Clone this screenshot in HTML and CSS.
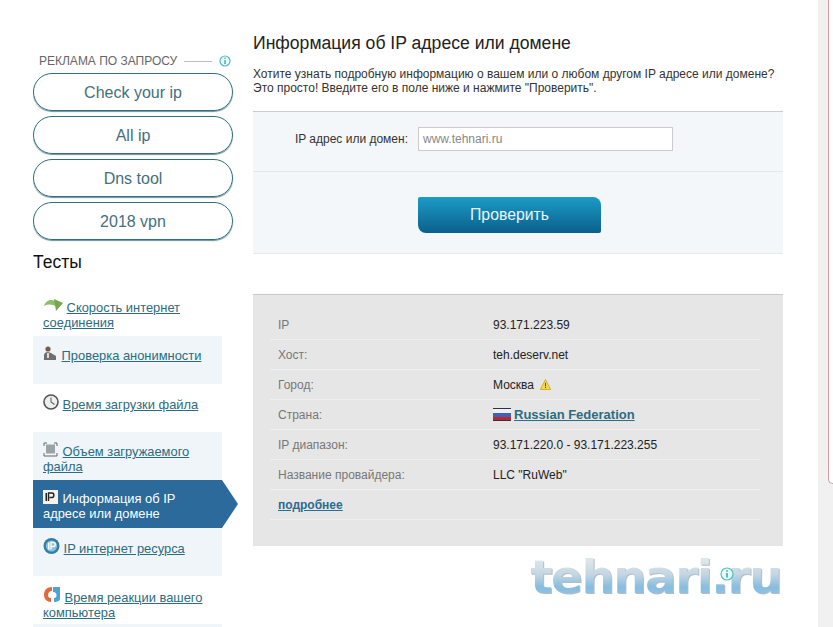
FILE: index.html
```html
<!DOCTYPE html>
<html lang="ru">

<head>
    <meta charset="UTF-8">
    <title>Информация об IP адресе или домене</title>
    <link rel="stylesheet" href="styles.css">
</head>

<body>
    <div class="page">
        <div class="side">
            <div class="ad-head">
                <span>РЕКЛАМА ПО ЗАПРОСУ</span>
                <i class="ad-line"></i>
                <svg class="ad-info" width="12" height="12" viewBox="0 0 12 12">
                    <circle cx="6" cy="6" r="5" fill="#eafafa" stroke="#55b9c4" stroke-width="1.2" />
                    <rect x="5.4" y="5" width="1.3" height="4" fill="#2f9fb0" />
                    <rect x="5.4" y="2.7" width="1.3" height="1.3" fill="#2f9fb0" />
                </svg>
            </div>
            <a class="pill" href="#">Check your ip</a>
            <a class="pill" href="#">All ip</a>
            <a class="pill" href="#">Dns tool</a>
            <a class="pill" href="#">2018 vpn</a>
            <h3 class="side-title">Тесты</h3>
            <ul class="menu">
                <li>
                    <svg class="ico" width="20" height="15" viewBox="0 0 20 15">
                        <path d="M1 8C3 2 8 1 12 3L14 9C9 6 5 6 1 8Z" fill="#8fbd6c" />
                        <path d="M11 1 20 5 13 13Z" fill="#74a94e" />
                    </svg>
                    <a href="#"> Скорость интернет соединения</a>
                </li>
                <li class="tint">
                    <svg class="ico" width="15" height="15" viewBox="0 0 15 15">
                        <circle cx="5" cy="3" r="2.6" fill="#7a5a48" />
                        <path d="M1 14V9C1 7 3 6 5 6L8 7 13 10 13 14Z" fill="#6f6f6f" />
                        <path d="M4 7 6 7 6 12 4 12Z" fill="#e8d9c8" />
                    </svg>
                    <a href="#"> Проверка анонимности</a>
                </li>
                <li>
                    <svg class="ico" width="16" height="16" viewBox="0 0 16 16">
                        <circle cx="8" cy="8" r="7" fill="#eef0f0" stroke="#555" stroke-width="1.6" />
                        <path d="M8 3.5V8L11.5 10.5" fill="none" stroke="#666" stroke-width="1.1" />
                    </svg>
                    <a href="#"> Время загрузки файла</a>
                </li>
                <li class="tint">
                    <svg class="ico" width="16" height="15" viewBox="0 0 16 15">
                        <path d="M1 4V1H4M11 1H14V4M1 11V14H14V11" fill="none" stroke="#666" stroke-width="1" />
                        <rect x="3" y="2.5" width="9" height="9" fill="#9aa3a6" />
                    </svg>
                    <a href="#"> Объем загружаемого файла</a>
                </li>
                <li class="active">
                    <svg class="ico" width="16" height="14" viewBox="0 0 16 14">
                        <rect width="15" height="14" fill="#f7f3ea" />
                        <rect x="2.5" y="3" width="1.5" height="8" fill="#222" />
                        <path d="M5.5 11V3H9C11.5 3 11.5 7.5 9 7.5H6.5" fill="none" stroke="#222" stroke-width="1.4" />
                    </svg>
                    <a href="#"> Информация об IP адресе или домене</a>
                </li>
                <li class="tint">
                    <svg class="ico" width="17" height="16" viewBox="0 0 17 16">
                        <circle cx="8.5" cy="8" r="8" fill="#2f7fa8" />
                        <circle cx="8.5" cy="8" r="5.6" fill="#8fc0d8" />
                        <rect x="5" y="4.5" width="1.5" height="7" fill="#fff" />
                        <path d="M8 11.5V4.5H10.5C12.8 4.5 12.8 8.5 10.5 8.5H8.6" fill="none" stroke="#fff" stroke-width="1.3" />
                    </svg>
                    <a href="#"> IP интернет ресурса</a>
                </li>
                <li>
                    <svg class="ico" width="18" height="17" viewBox="0 0 18 17">
                        <path d="M9 1C4 1 1 4 1 9 1 13 4 16 8 16L8 12C6 12 5 11 5 9 5 7 6.500 5 9 5Z" fill="#e2683c" />
                        <path d="M10 1 17 1 17 13C17 15 14 16 11 16L11 12C13 12 13.500 11 13.500 9 13.500 7 12 6 10 6Z" fill="#4fa3cf" />
                    </svg>
                    <a href="#"> Время реакции вашего компьютера</a>
                </li>
                <li class="tint"></li>
            </ul>
        </div>

        <div class="main">
            <h1>Информация об IP адресе или домене</h1>
            <p class="intro">Хотите узнать подробную информацию о вашем или о любом другом IP адресе или домене?<br>Это просто! Введите его в поле ниже и нажмите "Проверить".</p>

            <form class="check">
                <div class="check-row">
                    <label for="host">IP адрес или домен:</label>
                    <input type="text" id="host" placeholder="www.tehnari.ru">
                </div>
                <div class="check-send">
                    <button type="button">Проверить</button>
                </div>
            </form>

            <div class="info">
                <div class="row"><span class="key">IP</span><span>93.171.223.59</span></div>
                <div class="row"><span class="key">Хост:</span><span>teh.deserv.net</span></div>
                <div class="row"><span class="key">Город:</span><span>Москва
                    <svg class="warn" width="11" height="11" viewBox="0 0 11 11">
                        <path d="M5.500 .5 10.700 10.500H.3Z" fill="#f6d94a" stroke="#c9a52a" stroke-width=".8" />
                        <rect x="5" y="3.800" width="1" height="3.600" fill="#555" />
                        <rect x="5" y="8" width="1" height="1.100" fill="#555" />
                    </svg></span></div>
                <div class="row"><span class="key">Страна:</span><span class="country">
                    <svg width="18" height="13" viewBox="0 0 18 13">
                        <rect width="18" height="13" fill="#333" />
                        <rect y="1" width="18" height="4" fill="#eceff3" />
                        <rect y="5" width="18" height="4" fill="#3f62b5" />
                        <rect y="9" width="18" height="3" fill="#b8282e" />
                    </svg>
                    <a href="#">Russian Federation</a></span></div>
                <div class="row"><span class="key">IP диапазон:</span><span>93.171.220.0 - 93.171.223.255</span></div>
                <div class="row"><span class="key">Название провайдера:</span><span>LLC "RuWeb"</span></div>
                <div class="row"><a class="more" href="#">подробнее</a></div>
            </div>

            <div class="logo">
                <span class="logo-text">tehnari.ru</span>
                <svg class="logo-info" width="14" height="14" viewBox="0 0 14 14">
                    <circle cx="7" cy="7" r="6" fill="#e6fafa" stroke="#4fc0c0" stroke-width="1.200" />
                    <rect x="6.300" y="6" width="1.400" height="4.500" fill="#2a9aa0" />
                    <rect x="6.300" y="3.200" width="1.400" height="1.500" fill="#2a9aa0" />
                </svg>
            </div>
        </div>

        <div class="strip">
            <div class="strip-box"></div>
        </div>
    </div>
</body>

</html>
```

FILE: styles.css
```css
html,
body {
    margin: 0;
    padding: 0;
    height: 100%;
    overflow: hidden;
}

body {
    background: #fff;
    font-family: "Liberation Sans", Arial, sans-serif;
    font-size: 12px;
    color: #222;
}

a {
    color: #2b6c82;
}

.page {
    display: flex;
    height: 627px;
    padding-left: 33px;
    overflow: hidden;
}

/* left column */
.side {
    width: 205px;
    height: 627px;
    padding-top: 54px;
    box-sizing: border-box;
    overflow: hidden;
    flex-shrink: 0;
}

.ad-head {
    display: flex;
    align-items: center;
    height: 14px;
    margin-bottom: 5px;
    padding-left: 6px;
    font-size: 12px;
    color: #666;
}

.ad-line {
    width: 28px;
    height: 1px;
    margin: 0 7px;
    background: #bbb;
}

.pill {
    display: block;
    width: 198px;
    height: 36px;
    margin-bottom: 5px;
    border: 1px solid #2f6f7e;
    border-radius: 19px;
    box-shadow: 0 1px 1px #6d929c;
    line-height: 38px;
    text-align: center;
    font-size: 16px;
    color: #44707e;
    text-decoration: none;
}

.side-title {
    margin: 12px 0 16px;
    font-size: 17.5px;
    line-height: 20px;
    font-weight: normal;
    color: #111;
}

.menu {
    margin: 0;
    padding: 0;
    width: 189px;
    list-style: none;
}

.menu li {
    position: relative;
    height: 48px;
    padding: 10px 8px 0 10px;
    box-sizing: border-box;
    font-size: 12.9px;
    line-height: 15px;
}

.menu .tint {
    background: #eff5f8;
}

.menu .active {
    background: #2b6a9b;
}

.menu .active::after {
    content: "";
    position: absolute;
    left: 189px;
    top: 0;
    border-left: 16px solid #2b6a9b;
    border-top: 24px solid transparent;
    border-bottom: 24px solid transparent;
}

.menu .active a {
    color: #fff;
    text-decoration: none;
}

.ico {
    vertical-align: -1px;
}

/* main column */
.main {
    width: 530px;
    margin-left: 15px;
    padding-top: 32px;
    flex-shrink: 0;
}

h1 {
    margin: 0;
    font-size: 17.6px;
    line-height: 22px;
    font-weight: normal;
    color: #222;
}

.intro {
    margin: 13px 0 16px;
    line-height: 14px;
    color: #333;
}

.check {
    background: #f4f7f9;
    border-top: 1px solid #ccc;
    border-bottom: 1px solid #e6e8ea;
}

.check-row {
    display: flex;
    align-items: center;
    gap: 10px;
    height: 53px;
    padding-bottom: 6px;
    border-bottom: 1px solid #e3e7ea;
}

.check-row label {
    width: 155px;
    text-align: right;
    color: #333;
}

.check-row input {
    width: 255px;
    height: 24px;
    padding: 0 4px;
    box-sizing: border-box;
    border: 1px solid #ccc;
    background: #fff;
    font: 12px "Liberation Sans", Arial, sans-serif;
}

.check-row input::placeholder {
    color: #888;
}

.check-send {
    padding: 25px 0 20px 165px;
}

.check-send button {
    display: block;
    width: 183px;
    height: 36px;
    border: 0;
    border-radius: 2px 8px 2px 8px;
    background: linear-gradient(#1b9cc6, #0b5f8c);
    color: #e8f6fb;
    font: 15.8px "Liberation Sans", Arial, sans-serif;
}

.info {
    margin-top: 40px;
    padding: 15px 23px 26px 17px;
    background: #e6e6e6;
    border-top: 1px solid #c9c9c9;
}

.row {
    display: flex;
    align-items: center;
    height: 29px;
    padding-left: 8px;
    border-bottom: 1px solid #efefef;
}

.key {
    width: 215px;
    flex-shrink: 0;
    color: #777;
}

.warn {
    margin-left: 3px;
    vertical-align: -1px;
}

.country {
    display: flex;
    align-items: center;
    gap: 3px;
}

.country a {
    font-size: 13px;
    font-weight: bold;
}

.more {
    font-weight: bold;
    color: #2b6c92;
}

.logo {
    position: relative;
    display: flex;
    justify-content: flex-end;
    padding-right: 2px;
    margin-top: 6px;
}

.logo-text {
    font-family: "DejaVu Sans", sans-serif;
    font-weight: bold;
    font-size: 47px;
    line-height: 50px;
    letter-spacing: -1.6px;
    background: linear-gradient(#dfe7ec 15%, #c3d6e2 45%, #86bde0 70%, #9fc6e2);
    -webkit-background-clip: text;
    background-clip: text;
    color: transparent;
    filter: drop-shadow(1px 1px 0 #b4bdc4);
}

.logo-info {
    position: absolute;
    left: 467px;
    top: 15px;
}

/* right edge */
.strip {
    width: 15px;
    margin-left: 35px;
    flex-shrink: 0;
    background: #f2f1f1;
}

.strip-box {
    height: 484px;
    margin-left: 10px;
    background: #fff;
    border-left: 1px solid #d39aa0;
    border-bottom: 1px solid #d39aa0;
    border-bottom-left-radius: 5px;
    box-sizing: border-box;
}
```
